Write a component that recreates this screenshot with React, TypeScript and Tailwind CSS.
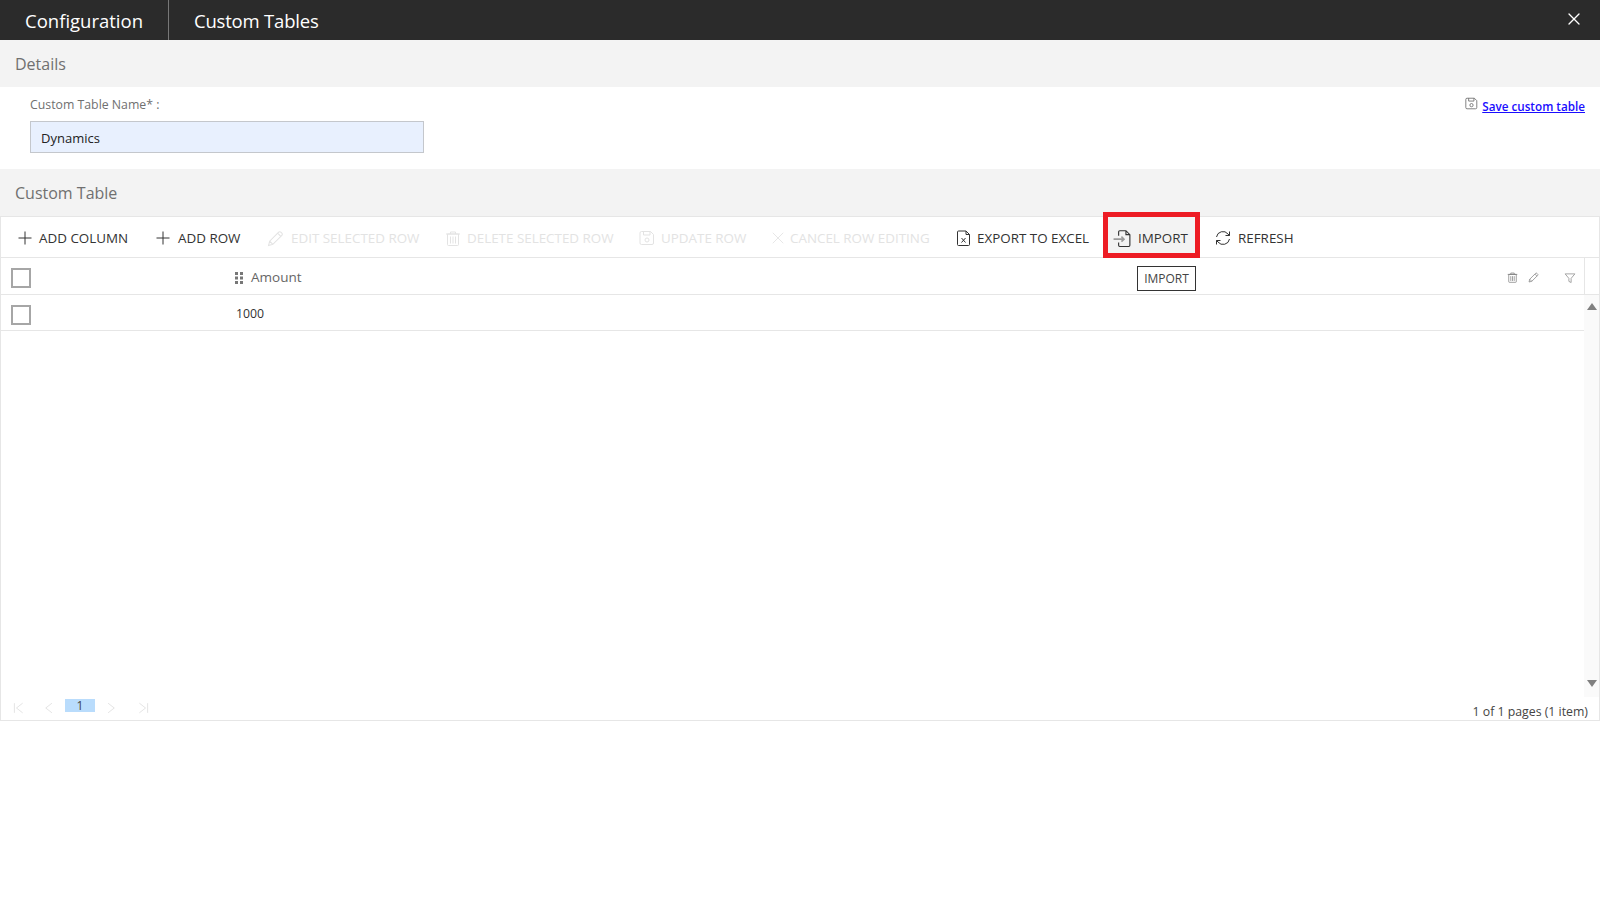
import React from 'react';
import { X } from 'lucide-react';

const iconProps = {
  xmlns: 'http://www.w3.org/2000/svg',
  viewBox: '0 0 16 16',
  fill: 'none',
  stroke: 'currentColor',
  strokeWidth: 1,
};

const PlusIcon = () => (
  <svg {...iconProps} className="w-[16px] h-[16px]">
    <path d="M8 1.5v13M1.5 8h13" />
  </svg>
);

const PencilIcon = ({ className }: { className: string }) => (
  <svg {...iconProps} className={className}>
    <path d="M1.5 14.5l1-4 8.5-8.5a1.4 1.4 0 012 0l1 1a1.4 1.4 0 010 2L5.5 13.5zM2.5 10.5l3 3M10 3l3 3" />
  </svg>
);

const TrashIcon = ({ className }: { className: string }) => (
  <svg {...iconProps} className={className}>
    <path d="M2.500 3.500h11v10.500a1 1 0 01-1 1H3.500a1 1 0 01-1-1zM1 3.500h14M5.500 3.500V1.500h5v2M5.500 6v7M8 6v7M10.500 6v7" />
  </svg>
);

const SaveIcon = ({ className }: { className: string }) => (
  <svg {...iconProps} className={className}>
    <path d="M2.500 1.500h9l3 3v8.500a1.500 1.500 0 01-1.500 1.500h-10.500a1.500 1.500 0 01-1.500-1.500v-10a1.500 1.500 0 011.500-1.500zM4.500 1.500v3.500h6.500v-3.500" />
    <circle cx="8" cy="10" r="2" />
  </svg>
);

const CancelIcon = () => (
  <svg {...iconProps} className="w-[14px] h-[14px]">
    <path d="M2 2l12 12M14 2L2 14" />
  </svg>
);

const ExcelIcon = () => (
  <svg {...iconProps} className="w-[16px] h-[18px]">
    <path d="M2.500 1h7.500l3.500 3.500v10a1 1 0 01-1 1h-10a1 1 0 01-1-1v-12.500a1 1 0 011-1zM10 1v3.500h3.500" />
    <path d="M5.500 8l4 4.500M9.500 8l-4 4.500" />
  </svg>
);

const ImportIcon = () => (
  <svg {...iconProps} className="w-[18px] h-[18px]">
    <path d="M5 6V2.500a1 1 0 011-1h5.500l3.500 3.500v9.500a1 1 0 01-1 1H6a1 1 0 01-1-1V12M11.500 1.500V5H15" />
    <path d="M0.500 9h9M7.500 6.800L9.800 9l-2.300 2.200" stroke="#9a9a9a" strokeWidth={1.4} />
  </svg>
);

const RefreshIcon = () => (
  <svg {...iconProps} className="w-[16px] h-[16px]">
    <path d="M1.500 7a6.500 6.500 0 0111.500-3l1.500 1.500M14.500 1.500v4h-4" />
    <path d="M14.500 9a6.500 6.500 0 01-11.500 3l-1.500-1.500M1.500 14.500v-4h4" />
  </svg>
);

const DragIcon = () => (
  <svg viewBox="0 0 8 12" className="w-[8px] h-[12px] fill-[#777777]">
    <rect x="0" y="0" width="3" height="3" />
    <rect x="5" y="0" width="3" height="3" />
    <rect x="0" y="4.500" width="3" height="3" />
    <rect x="5" y="4.500" width="3" height="3" />
    <rect x="0" y="9" width="3" height="3" />
    <rect x="5" y="9" width="3" height="3" />
  </svg>
);

const FilterIcon = () => (
  <svg {...iconProps} className="w-[12px] h-[12px] text-[#8a8a8a]">
    <path d="M1.500 2.500h13L9.500 8.500v5.500l-3-1.500v-4z" />
  </svg>
);

const Checkbox = () => <div className="w-[20px] h-[20px] border-2 border-[#a6a6a6] bg-white" />;

const App: React.FC = () => {
  return (
    <div className="w-full h-[900px] bg-white font-['Open_Sans','Noto_Sans',sans-serif] text-[#333333] overflow-hidden">
      <div className="h-[40px] bg-[#2b2b2b] flex items-center text-white text-[18.500px]">
        <div className="h-full flex items-center pl-[25px] pr-[25px] pt-[1px] border-r border-[#777777]">Configuration</div>
        <div className="pl-[25px] pt-[1px] tracking-[-0.2px]">Custom Tables</div>
        <button className="ml-auto mr-[16px] mb-[3px]">
          <X className="w-[20px] h-[20px]" strokeWidth={1.6} />
        </button>
      </div>

      <div className="h-[47px] bg-[#f3f3f3] flex items-center pl-[15px] text-[16px] text-[#707070]">Details</div>

      <div className="h-[82px] pl-[30px] pr-[15px] flex justify-between">
        <div>
          <div className="mt-[8px] text-[12.300px] leading-[20px] text-[#707070]">Custom Table Name* :</div>
          <div className="mt-[6px] w-[394px] h-[32px] bg-[#e8f0fe] border border-[#c4c7cc] flex items-center pl-[10px] pt-[3px] text-[13px] text-[#222222]">
            Dynamics
          </div>
        </div>
        <div className="flex items-start mt-[10px] text-[11.700px] font-semibold text-[#1a0dff]">
          <SaveIcon className="w-[13px] h-[13px] mr-[4px] text-[#666666]" />
          <a href="#" className="underline mt-[1px] leading-[16px]">Save custom table</a>
        </div>
      </div>

      <div className="h-[47px] bg-[#f3f3f3] flex items-center pl-[15px] text-[16px] text-[#707070]">Custom Table</div>

      <div className="h-[505px] border border-[#e6e6e6] flex flex-col">
        <div className="h-[41px] shrink-0 border-b border-[#e6e6e6] flex items-center pl-[16px] pt-[3px] text-[13.400px] text-[#333333]">
          <div className="flex items-center gap-[6px] w-[138px]"><PlusIcon />ADD COLUMN</div>
          <div className="flex items-center gap-[7px] w-[112px]"><PlusIcon />ADD ROW</div>
          <div className="flex items-center gap-[7px] w-[178px] text-[#e3e3e3]"><PencilIcon className="w-[17px] h-[17px]" />EDIT SELECTED ROW</div>
          <div className="flex items-center gap-[6px] w-[194px] text-[#e3e3e3]"><TrashIcon className="w-[16px] h-[17px]" />DELETE SELECTED ROW</div>
          <div className="flex items-center gap-[6px] w-[132px] text-[#e3e3e3]"><SaveIcon className="w-[16px] h-[16px]" />UPDATE ROW</div>
          <div className="flex items-center gap-[5px] w-[185px] text-[#e3e3e3]"><CancelIcon />CANCEL ROW EDITING</div>
          <div className="flex items-center gap-[5px] w-[157px]"><ExcelIcon />EXPORT TO EXCEL</div>
          <div className="relative flex items-center w-[102px] h-full">
            <div className="absolute left-[-10px] top-[-8px] w-[97px] h-[46px] border-[5px] border-[#ed1c24] bg-[#f3f3f3]" />
            <span className="relative flex items-center gap-[7px]"><ImportIcon />IMPORT</span>
          </div>
          <div className="flex items-center gap-[7px]"><RefreshIcon />REFRESH</div>
        </div>

        <div className="relative h-[37px] shrink-0 border-b border-[#e6e6e6] flex items-center pl-[10px] pr-[16px] pt-[3px]">
          <Checkbox />
          <div className="ml-[204px] flex items-center gap-[8px] text-[13.500px] text-[#666666]"><DragIcon />Amount</div>
          <div className="absolute left-[1136px] top-[8px] h-[25px] w-[59px] border border-[#333333] bg-white flex items-center justify-center text-[12px] text-[#444444] z-10">IMPORT</div>
          <div className="ml-auto flex items-center mr-[7px] text-[#777777]">
            <TrashIcon className="w-[11px] h-[11px] mr-[10px]" />
            <PencilIcon className="w-[11px] h-[11px] mr-[25px]" />
            <FilterIcon />
          </div>
          <div className="absolute right-[14px] top-0 h-full border-l border-[#e6e6e6]" />
        </div>

        <div className="flex-1 flex min-h-0">
          <div className="flex-1 flex flex-col">
            <div className="h-[36px] border-b border-[#e6e6e6] flex items-center pl-[10px] pt-[4px]">
              <Checkbox />
              <div className="ml-[205px] text-[12.300px] text-[#333333]">1000</div>
            </div>
            <div className="flex-1" />
          </div>
          <div className="w-[15px] h-[402px] shrink-0 bg-[#fafafa] flex flex-col items-center justify-between pt-[8px] pb-[10px]">
            <div className="w-0 h-0 border-l-[5px] border-r-[5px] border-b-[7px] border-l-transparent border-r-transparent border-b-[#808080]" />
            <div className="w-0 h-0 border-l-[5px] border-r-[5px] border-t-[7px] border-l-transparent border-r-transparent border-t-[#808080]" />
          </div>
        </div>

        <div className="h-[30px] shrink-0 flex items-center pl-[12px] pr-[11px] text-[#e3e3e3]">
          <svg {...iconProps} className="w-[11px] h-[14px] mt-[6px]" strokeWidth={1.4}>
            <path d="M2 1v14M14 1L5 8l9 7" />
          </svg>
          <svg {...iconProps} className="w-[11px] h-[14px] ml-[19px] mt-[6px]" strokeWidth={1.4}>
            <path d="M13 1L4 8l9 7" />
          </svg>
          <div className="ml-[11px] w-[30px] h-[13px] bg-[#b9dcfc] flex items-center justify-center text-[12px] text-[#444444] mt-[1px]">1</div>
          <svg {...iconProps} className="w-[11px] h-[14px] ml-[11px] mt-[6px]" strokeWidth={1.4}>
            <path d="M3 1l9 7-9 7" />
          </svg>
          <svg {...iconProps} className="w-[11px] h-[14px] ml-[21px] mt-[6px]" strokeWidth={1.4}>
            <path d="M14 1v14M2 1l9 7-9 7" />
          </svg>
          <div className="ml-auto text-[12.300px] text-[#444444] mt-[15px]">1 of 1 pages (1 item)</div>
        </div>
      </div>
    </div>
  );
};

export default App;
